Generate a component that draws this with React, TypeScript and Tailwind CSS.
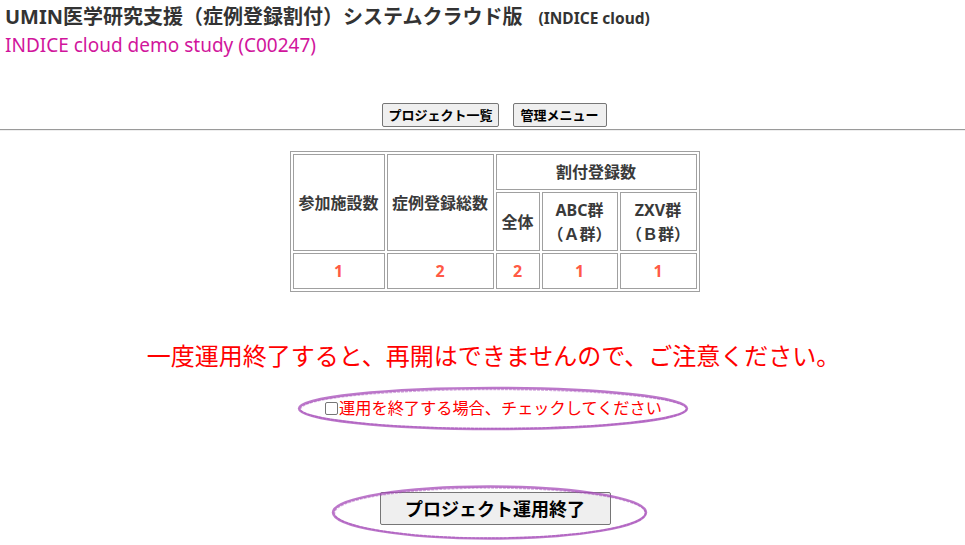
export default function App() {
  const font = { fontFamily: '"Noto Sans", "Noto Sans CJK JP", sans-serif' };
  return (
    <div className="relative w-[965px] h-[545px] bg-white overflow-hidden text-[#333]" style={font}>
      <div className="px-[5px] pt-[3px]">
        <h1 className="text-[20px] font-bold leading-[28px] text-[#333] whitespace-nowrap">
          UMIN医学研究支援（症例登録割付）システムクラウド版
          <span className="text-[15.5px] ml-[16px]">(INDICE cloud)</span>
        </h1>
        <div className="text-[19px] leading-[24px] text-[#d1159c] mt-[1px]">INDICE cloud demo study (C00247)</div>
      </div>

      <div className="flex justify-center gap-[14px] mt-[46px] ml-[24px]">
        <button className="h-[24px] px-[5px] text-[13px] font-bold leading-none border border-[#767676] rounded-[2px] bg-[#efefef] text-black">
          プロジェクト一覧
        </button>
        <button className="h-[24px] px-[7px] text-[13px] font-bold leading-none border border-[#767676] rounded-[2px] bg-[#efefef] text-black">
          管理メニュー
        </button>
      </div>
      <div className="mt-[2px] border-t border-t-[#9a9a9a] border-b border-b-[#eeeeee]" />

      <div className="flex justify-center mt-[20px]">
        <table className="border-separate border-spacing-[2px] border border-[#a0a0a0] text-[16px] font-bold text-[#3a3a3a] ml-[24px]">
          <tbody>
            <tr>
              <th rowSpan={2} className="w-[92px] border border-[#a0a0a0] font-bold px-[3px]">参加施設数</th>
              <th rowSpan={2} className="w-[107px] border border-[#a0a0a0] font-bold px-[3px]">症例登録総数</th>
              <th colSpan={3} className="h-[36px] border border-[#a0a0a0] font-bold">割付登録数</th>
            </tr>
            <tr>
              <th className="w-[44px] h-[59px] border border-[#a0a0a0] font-bold">全体</th>
              <th className="w-[76px] border border-[#a0a0a0] font-bold leading-[24px]">ABC群<br />（Ａ群）</th>
              <th className="w-[77px] border border-[#a0a0a0] font-bold leading-[24px]">ZXV群<br />（Ｂ群）</th>
            </tr>
            <tr className="text-[#ff5a45]">
              <td className="h-[36px] border border-[#a0a0a0] text-center">1</td>
              <td className="border border-[#a0a0a0] text-center">2</td>
              <td className="border border-[#a0a0a0] text-center">2</td>
              <td className="border border-[#a0a0a0] text-center">1</td>
              <td className="border border-[#a0a0a0] text-center">1</td>
            </tr>
          </tbody>
        </table>
      </div>

      <p className="text-center text-[24px] leading-[30px] text-[#ff0000] mt-[49px] ml-[22px]">
        一度運用終了すると、再開はできませんので、ご注意ください。
      </p>

      <label className="flex justify-center items-center mt-[26px] text-[16.2px] leading-[22px] text-[#ff0000] ml-[22px]">
        <span className="inline-block w-[13px] h-[13px] border border-[#767676] rounded-[2px] bg-white mr-[1px]" />
        運用を終了する場合、チェックしてください
      </label>

      <div className="flex justify-center mt-[73px] ml-[25px]">
        <button className="w-[231px] h-[33px] text-[18px] font-bold leading-none border border-[#767676] rounded-[2px] bg-[#efefef] text-black">
          プロジェクト運用終了
        </button>
      </div>

      <svg className="absolute left-0 top-0 pointer-events-none" width="965" height="545">
        <g fill="none" stroke="#a54bb8" strokeOpacity="0.75">
          <ellipse cx="493" cy="408.5" rx="194" ry="20.5" strokeWidth="2.5" />
          <ellipse cx="493.5" cy="409" rx="193" ry="19.5" strokeWidth="1.5" strokeOpacity="0.45" strokeDasharray="3 1" />
          <ellipse cx="489.5" cy="512.5" rx="156.5" ry="26" strokeWidth="2.5" />
          <ellipse cx="490" cy="513" rx="155.5" ry="25" strokeWidth="1.5" strokeOpacity="0.45" strokeDasharray="3 1" />
        </g>
      </svg>
    </div>
  );
}
